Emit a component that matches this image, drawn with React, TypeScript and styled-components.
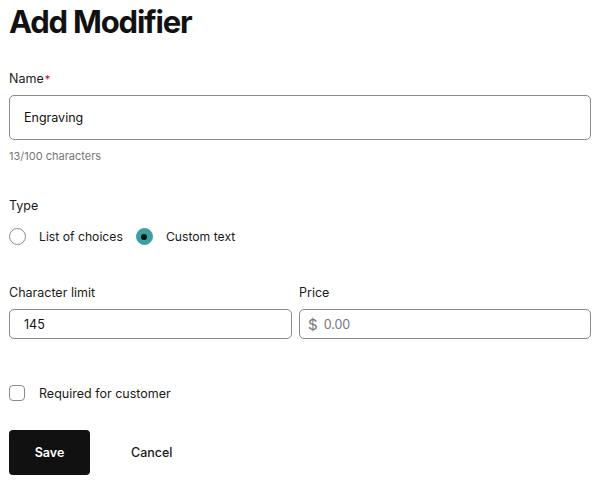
import React from 'react';
import styled, { createGlobalStyle } from 'styled-components';

const GlobalStyle = createGlobalStyle`
  body {
    margin: 0;
    background: #ffffff;
    font-family: Inter, 'Liberation Sans', sans-serif;
    color: #111111;
  }
`;

const Page = styled.div`
  padding: 0 9px;
  display: flex;
  flex-direction: column;
`;

const Title = styled.h1`
  margin: 0;
  font-size: 31px;
  font-weight: 700;
  line-height: 43px;
  letter-spacing: -1.2px;
  color: #111111;
`;

const Field = styled.div<{ $top?: number }>`
  display: flex;
  flex-direction: column;
  margin-top: ${({ $top = 0 }) => $top}px;
  min-width: 0;
`;

const Label = styled.label`
  font-size: 12.5px;
  line-height: 16px;
  color: #1b1b1b;
  margin-bottom: 8px;

  .req {
    color: #d0021b;
    font-size: 11px;
    vertical-align: top;
    margin-left: 1px;
  }
`;

const TextBox = styled.div<{ $tall?: boolean }>`
  height: ${({ $tall }) => ($tall ? 45 : 30)}px;
  box-sizing: border-box;
  border: 1px solid #8a8a8a;
  border-radius: 5px;
  display: flex;
  align-items: center;
  padding: 0 14px;
  font-size: 12.5px;
  color: #111111;
  gap: 6px;
`;

const Prefix = styled.span`
  color: #767676;
  font-size: 15px;
  margin-left: -6px;
`;

const Placeholder = styled.span`
  color: #767676;
`;

const Helper = styled.div`
  margin-top: 9px;
  font-size: 11px;
  color: #767676;
`;

const Row = styled.div`
  display: grid;
  grid-template-columns: 283px 1fr;
  gap: 7px;
  margin-top: 40px;
`;

const RadioGroup = styled.div`
  display: flex;
  align-items: center;
  gap: 13px;
  margin-top: 6px;
`;

const Option = styled.label`
  display: flex;
  align-items: center;
  gap: 13px;
  font-size: 12.2px;
  color: #1b1b1b;
`;

const Radio = styled.span<{ $checked?: boolean }>`
  width: 17px;
  height: 17px;
  box-sizing: border-box;
  border-radius: 50%;
  border: 1px solid ${({ $checked }) => ($checked ? '#3c9fa3' : '#8a8a8a')};
  background: ${({ $checked }) => ($checked ? '#3c9fa3' : '#ffffff')};
  display: flex;
  align-items: center;
  justify-content: center;

  &::after {
    content: '';
    width: 6px;
    height: 6px;
    border-radius: 50%;
    background: #111111;
    display: ${({ $checked }) => ($checked ? 'block' : 'none')};
  }
`;

const Checkbox = styled.span`
  width: 16px;
  height: 16px;
  box-sizing: border-box;
  border: 1px solid #8a8a8a;
  border-radius: 4px;
`;

const CheckRow = styled(Option)`
  margin-top: 46px;
  gap: 14px;
  font-size: 12.5px;
`;

const Actions = styled.div`
  display: flex;
  align-items: center;
  gap: 41px;
  margin-top: 29px;
`;

const Button = styled.button<{ $primary?: boolean }>`
  font-family: inherit;
  font-size: 12.5px;
  height: 45px;
  border-radius: 4px;
  border: none;
  cursor: pointer;
  padding: 0;
  width: ${({ $primary }) => ($primary ? '81px' : 'auto')};
  background: ${({ $primary }) => ($primary ? '#111111' : 'transparent')};
  color: ${({ $primary }) => ($primary ? '#ffffff' : '#1b1b1b')};
  font-weight: ${({ $primary }) => ($primary ? 600 : 500)};
`;

export default function App() {
  return (
    <Page>
      <GlobalStyle />
      <Title>Add Modifier</Title>

      <Field $top={28}>
        <Label>
          Name<span className="req">*</span>
        </Label>
        <TextBox $tall>Engraving</TextBox>
        <Helper>13/100 characters</Helper>
      </Field>

      <Field $top={35}>
        <Label>Type</Label>
        <RadioGroup>
          <Option>
            <Radio />
            List of choices
          </Option>
          <Option>
            <Radio $checked />
            Custom text
          </Option>
        </RadioGroup>
      </Field>

      <Row>
        <Field>
          <Label>Character limit</Label>
          <TextBox>145</TextBox>
        </Field>
        <Field>
          <Label>Price</Label>
          <TextBox>
            <Prefix>$</Prefix>
            <Placeholder>0.00</Placeholder>
          </TextBox>
        </Field>
      </Row>

      <CheckRow>
        <Checkbox />
        Required for customer
      </CheckRow>

      <Actions>
        <Button $primary>Save</Button>
        <Button>Cancel</Button>
      </Actions>
    </Page>
  );
}
